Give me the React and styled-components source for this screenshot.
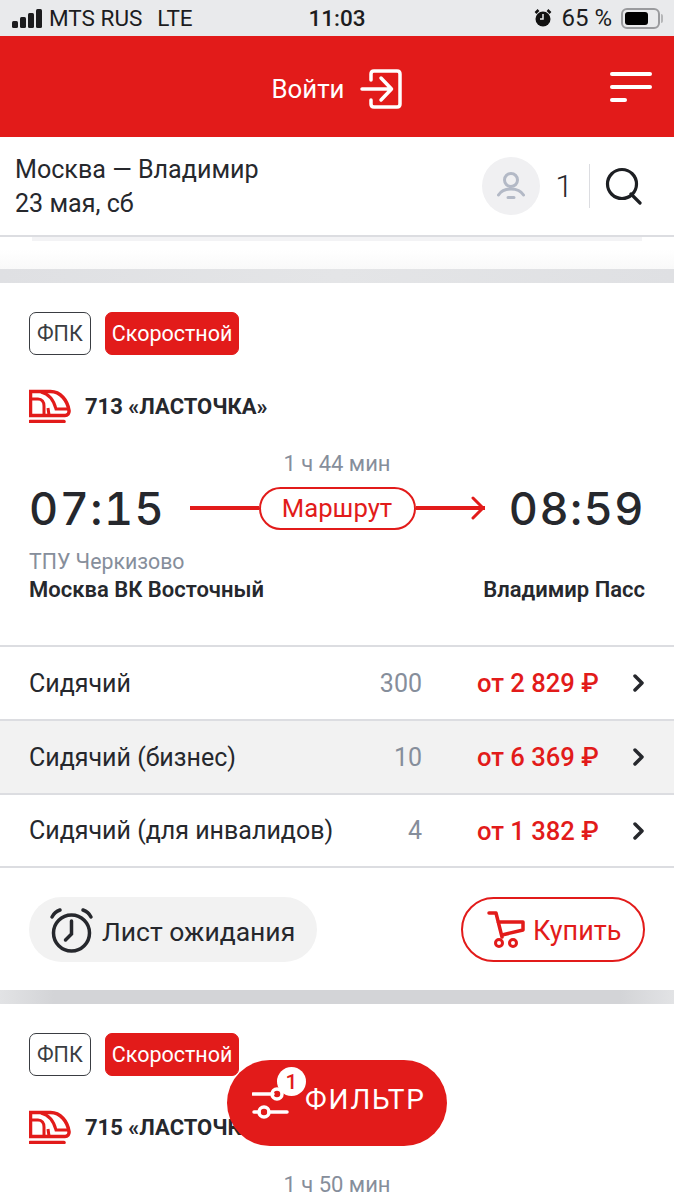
import React from 'react'
import styled, { createGlobalStyle } from 'styled-components'

const RED = '#e21b1a'
const INK = '#26282d'
const GREY = '#868e9b'
const FONT = `Roboto, "Noto Sans", "Liberation Sans", sans-serif`

const Global = createGlobalStyle`
  html, body { margin: 0; padding: 0; background: #fff; }
  body { font-family: ${FONT}; color: ${INK}; }
  * { box-sizing: border-box; }
`

const Page = styled.div`
  position: relative;
  width: 674px;
  height: 1200px;
  overflow: hidden;
`

const StatusBar = styled.div`
  height: 36px;
  background: #e9eaec;
  display: grid;
  grid-template-columns: 1fr auto 1fr;
  align-items: center;
  padding: 0 9px 0 12px;
  font-size: 24px;
  color: #1c1c1e;
`
const StatusLeft = styled.div`
  display: flex;
  align-items: center;
  gap: 7px;
`
const Carrier = styled.span`
  font-size: 22.5px;
  &:last-child {
    margin-left: 8px;
  }
`
const Clock = styled.span`
  font-size: 22.5px;
  font-weight: 500;
  margin-right: 3px;
`
const StatusRight = styled.div`
  display: flex;
  align-items: center;
  justify-content: flex-end;
  gap: 9px;
`
const Battery = styled.div`
  position: relative;
  width: 39px;
  height: 21px;
  padding: 2px;
  margin-right: 5px;
  border: 2px solid #9a9b9e;
  border-radius: 6px;
  &::before {
    content: '';
    display: block;
    width: 23px;
    height: 13px;
    background: #000;
    border-radius: 3px;
  }
  &::after {
    content: '';
    position: absolute;
    right: -5px;
    top: 4px;
    width: 2px;
    height: 9px;
    background: #b5b6b8;
    border-radius: 0 2px 2px 0;
  }
`

const Header = styled.header`
  height: 101px;
  background: ${RED};
  display: flex;
  align-items: center;
  justify-content: center;
  position: relative;
`
const Login = styled.div`
  display: flex;
  align-items: center;
  gap: 16px;
  color: #fff;
  font-size: 25.8px;
  margin-top: 5px;
`
const Burger = styled.div`
  position: absolute;
  top: 36px;
  right: 22px;
  width: 42px;
  display: flex;
  flex-direction: column;
  gap: 9px;
`
const BurgerLine = styled.span`
  display: block;
  height: 4px;
  width: ${p => p.$w}px;
  background: #fff;
  border-radius: 2px;
`

const SubHeader = styled.div`
  height: 100px;
  display: flex;
  align-items: center;
  justify-content: space-between;
  padding: 0 31px 0 15px;
  border-bottom: 2px solid #dcdde1;
`
const Route = styled.div`
  font-size: 25.1px;
  line-height: 34px;
  color: ${INK};
  padding-top: 2px;
`
const SubRight = styled.div`
  display: flex;
  align-items: center;
`
const Avatar = styled.div`
  width: 58px;
  height: 58px;
  border-radius: 50%;
  background: #f0f0f2;
  display: flex;
  align-items: center;
  justify-content: center;
`
const Count = styled.span`
  font-size: 32px;
  font-weight: 300;
  margin: 0 16px 0 15px;
`
const Divider = styled.span`
  width: 1px;
  height: 44px;
  background: #dcdde1;
  margin-right: 15px;
`

const Sliver = styled.div`
  height: 4px;
  margin: 0 32px;
  background: #f3f3f5;
`
const Fade = styled.div`
  height: 28px;
  background: linear-gradient(#fff 30%, #f9f9f9);
`
const Band = styled.div`
  height: 14px;
  background: linear-gradient(90deg, #dfe0e3, #e4e5e7 50%, #dfe0e3);
`
const DarkBand = styled(Band)`
  background: linear-gradient(90deg, #e2e3e5, #d3d4d7 8%, #d3d4d7 92%, #e2e3e5);
`

const Card = styled.section`
  padding-top: 29px;
`
const Tags = styled.div`
  display: flex;
  gap: 14px;
  padding: 0 29px;
`
const Tag = styled.span`
  height: 43px;
  padding: 0 ${p => (p.$fill ? 6 : 7)}px;
  display: flex;
  align-items: center;
  font-size: 21.5px;
  border-radius: 7px;
  border: 1.5px solid ${p => (p.$fill ? RED : '#3a3d42')};
  background: ${p => (p.$fill ? RED : '#fff')};
  color: ${p => (p.$fill ? '#fff' : '#3a3d42')};
`
const TrainRow = styled.div`
  display: flex;
  align-items: center;
  gap: 14px;
  padding: 0 29px;
  margin-top: 33px;
  height: 36px;
`
const TrainName = styled.span`
  font-size: 22px;
  font-weight: 700;
`
const Duration = styled.div`
  text-align: center;
  font-size: 22px;
  color: ${GREY};
  margin-top: 27px;
  height: 25px;
  line-height: 25px;
`
const Times = styled.div`
  display: flex;
  align-items: center;
  justify-content: space-between;
  padding: 0 29px;
  margin-top: 10px;
  height: 44px;
`
const Time = styled.span`
  font-family: Inter, ${FONT};
  font-size: 45px;
  letter-spacing: 1.5px;
  font-weight: 500;
  font-variant-numeric: tabular-nums;
  color: ${INK};
`
const Track = styled.div`
  width: 295px;
  display: flex;
  align-items: center;
`
const Line = styled.span`
  flex: 1;
  height: 3.5px;
  background: ${RED};
`
const RouteButton = styled.span`
  width: 157px;
  height: 43px;
  border: 2px solid ${RED};
  border-radius: 22px;
  display: flex;
  align-items: center;
  justify-content: center;
  font-size: 25.7px;
  color: ${RED};
`
const Arrow = styled.svg`
  margin-left: -14px;
`
const Stations = styled.div`
  display: flex;
  align-items: flex-end;
  justify-content: space-between;
  padding: 0 29px;
  margin-top: 18px;
  height: 56px;
`
const StationInfo = styled.div`
  display: flex;
  flex-direction: column;
`
const Terminal = styled.span`
  font-size: 21.3px;
  line-height: 28px;
  color: ${GREY};
`
const Station = styled.span`
  font-size: 22px;
  line-height: 28px;
  font-weight: 600;
`
const Fares = styled.div`
  margin-top: 41px;
  border-top: 2px solid #dcdde1;
`
const Fare = styled.div`
  height: 74px;
  display: grid;
  grid-template-columns: 1fr 60px 196px 27px;
  align-items: center;
  padding: 0 29px;
  border-bottom: 2px solid #dcdde1;
  background: ${p => (p.$active ? '#f2f2f2' : '#fff')};
  font-size: 25px;
  &:last-child {
    height: 73px;
  }
`
const Seats = styled.span`
  text-align: right;
  color: ${GREY};
  font-size: 25px;
`
const Price = styled.span`
  color: ${RED};
  font-size: 25.6px;
  font-weight: 500;
  padding-left: 55px;
  white-space: nowrap;
`
const Chevron = styled.svg`
  justify-self: end;
`
const Actions = styled.div`
  display: flex;
  justify-content: space-between;
  padding: 29px 29px 0;
  height: 122px;
`
const Waiting = styled.div`
  height: 65px;
  width: 288px;
  padding-left: 20px;
  background: #f2f2f2;
  border-radius: 33px;
  display: flex;
  align-items: center;
  gap: 8px;
  font-size: 26.5px;
`
const Buy = styled.div`
  height: 65px;
  width: 184px;
  padding-left: 24px;
  border: 2px solid ${RED};
  border-radius: 33px;
  display: flex;
  align-items: center;
  gap: 8px;
  color: ${RED};
  font-size: 27px;
`
const ActionLabel = styled.span`
  margin-top: 3px;
`
const Fab = styled.div`
  position: absolute;
  left: 227px;
  top: 1060px;
  width: 220px;
  height: 86px;
  background: ${RED};
  border-radius: 43px;
  color: #fff;
  font-size: 28px;
  letter-spacing: 1.8px;
  display: flex;
  align-items: center;
  padding: 0 0 0 25px;
  gap: 16px;
`
const FabLabel = styled.span`
  margin-top: -7px;
`
const FabIcon = styled.div`
  position: relative;
  width: 37px;
  height: 40px;
`
const Badge = styled.span`
  position: absolute;
  left: 25px;
  top: -16px;
  width: 29px;
  height: 29px;
  border-radius: 50%;
  background: #fff;
  color: ${RED};
  font-size: 21px;
  font-weight: 500;
  letter-spacing: 0;
  display: flex;
  align-items: center;
  justify-content: center;
`

const TrainIcon = () => (
  <svg width="42" height="34" viewBox="0 0 42 34" fill="none" stroke={RED} strokeWidth="3.500">
    <path d="M1.500 26.500V2.500h20c10 0 17 9 18.500 19 .4 3-1.500 5-4 5z" />
    <path d="M2 10h7c4 0 6 3 6 7v9" strokeWidth="3" />
    <path d="M12 3c8 2 13 9 15 17h12M19 19l1 7" strokeWidth="3" />
    <path d="M1 32.500h34" strokeLinecap="round" />
  </svg>
)

const TrainTitle = ({ name }) => (
  <TrainRow>
    <TrainIcon />
    <TrainName>{name}</TrainName>
  </TrainRow>
)

const fares = [
  { name: 'Сидячий', seats: '300', price: 'от 2 829 ₽' },
  { name: 'Сидячий (бизнес)', seats: '10', price: 'от 6 369 ₽', active: true },
  { name: 'Сидячий (для инвалидов)', seats: '4', price: 'от 1 382 ₽' },
]

export default function App() {
  return (
    <Page>
      <Global />
      <StatusBar>
        <StatusLeft>
          <svg width="30" height="19" viewBox="0 0 30 19" fill="#1c1c1e">
            <rect x="0" y="12" width="6" height="7" rx="1.500" />
            <rect x="8" y="8" width="6" height="11" rx="1.500" />
            <rect x="16" y="4" width="6" height="15" rx="1.500" />
            <rect x="24" y="0" width="6" height="19" rx="1.500" />
          </svg>
          <Carrier>MTS RUS</Carrier>
          <Carrier>LTE</Carrier>
        </StatusLeft>
        <Clock>11:03</Clock>
        <StatusRight>
          <svg width="18" height="20" viewBox="0 0 18 20">
            <circle cx="9" cy="11" r="7.500" fill="#111" />
            <path d="M1.500 5l3-3M16.500 5l-3-3" stroke="#111" strokeWidth="2.500" />
            <path d="M9 6v5H6" stroke="#e9eaec" strokeWidth="1.500" fill="none" />
          </svg>
          <span>65 %</span>
          <Battery />
        </StatusRight>
      </StatusBar>

      <Header>
        <Login>
          Войти
          <svg width="42" height="40" viewBox="0 0 42 40" fill="none" stroke="#fff" strokeWidth="3.500" strokeLinecap="round" strokeLinejoin="round">
            <path d="M11 11V5c0-2 1-3 3-3h23c2 0 3 1 3 3v30c0 2-1 3-3 3H14c-2 0-3-1-3-3v-4" />
            <path d="M2 20h29M21 9l10.500 11L21 31" />
          </svg>
        </Login>
        <Burger>
          <BurgerLine $w={42} />
          <BurgerLine $w={42} />
          <BurgerLine $w={17} />
        </Burger>
      </Header>

      <SubHeader>
        <Route>
          Москва — Владимир
          <br />
          23 мая, сб
        </Route>
        <SubRight>
          <Avatar>
            <svg width="28" height="28" viewBox="0 0 28 28" fill="none" stroke="#b3b9c6" strokeWidth="3" strokeLinecap="round">
              <ellipse cx="14" cy="8" rx="6.500" ry="6.500" />
              <path d="M1.500 23c2.500-4 6.500-6 12.500-6s10 2 12.500 6M11 25.500h6" />
            </svg>
          </Avatar>
          <Count>1</Count>
          <Divider />
          <svg width="38" height="38" viewBox="0 0 38 38" fill="none" stroke="#1d1f23" strokeWidth="3.200" strokeLinecap="round">
            <ellipse cx="17" cy="17" rx="14.500" ry="14.500" />
            <path d="M26 27l9 9" />
          </svg>
        </SubRight>
      </SubHeader>
      <Sliver />
      <Fade />
      <Band />

      <Card>
        <Tags>
          <Tag>ФПК</Tag>
          <Tag $fill>Скоростной</Tag>
        </Tags>
        <TrainTitle name="713 «ЛАСТОЧКА»" />
        <Duration>1 ч 44 мин</Duration>
        <Times>
          <Time>07:15</Time>
          <Track>
            <Line />
            <RouteButton>Маршрут</RouteButton>
            <Line />
            <Arrow width="14" height="24" viewBox="0 0 14 24" fill="none" stroke={RED} strokeWidth="3" strokeLinecap="round" strokeLinejoin="round">
              <path d="M2 2l10 10L2 22" />
            </Arrow>
          </Track>
          <Time>08:59</Time>
        </Times>
        <Stations>
          <StationInfo>
            <Terminal>ТПУ Черкизово</Terminal>
            <Station>Москва ВК Восточный</Station>
          </StationInfo>
          <Station>Владимир Пасс</Station>
        </Stations>
        <Fares>
          {fares.map(f => (
            <Fare key={f.name} $active={f.active}>
              <span>{f.name}</span>
              <Seats>{f.seats}</Seats>
              <Price>{f.price}</Price>
              <Chevron width="12" height="18" viewBox="0 0 12 18" fill="none" stroke="#26282d" strokeWidth="3.500" strokeLinecap="round" strokeLinejoin="round">
                <path d="M2 2l7 7-7 7" />
              </Chevron>
            </Fare>
          ))}
        </Fares>
        <Actions>
          <Waiting>
            <svg width="45" height="46" viewBox="0 0 45 46" fill="none" stroke="#26282d" strokeWidth="3.500" strokeLinecap="round">
              <circle cx="22.500" cy="26" r="18" />
              <path d="M22.500 14v13l-6 6M3 10c2-4 5-6 8-7M42 10c-2-4-5-6-8-7" />
            </svg>
            <ActionLabel>Лист ожидания</ActionLabel>
          </Waiting>
          <Buy>
            <svg width="38" height="38" viewBox="0 0 38 38" fill="none" stroke={RED} strokeWidth="3.500" strokeLinecap="round" strokeLinejoin="round">
              <path d="M2 2h7l6 24M11 11h25v8l-21 5" />
              <circle cx="12" cy="32" r="3.500" strokeWidth="3" />
              <circle cx="26" cy="32" r="3.500" strokeWidth="3" />
            </svg>
            <ActionLabel>Купить</ActionLabel>
          </Buy>
        </Actions>
      </Card>
      <DarkBand />

      <Card>
        <Tags>
          <Tag>ФПК</Tag>
          <Tag $fill>Скоростной</Tag>
        </Tags>
        <TrainTitle name="715 «ЛАСТОЧКА»" />
        <Duration>1 ч 50 мин</Duration>
      </Card>

      <Fab>
        <FabIcon>
          <svg width="37" height="40" viewBox="0 0 37 40" fill="none" stroke="#fff" strokeWidth="3.500" strokeLinecap="round">
            <path d="M1 11h20M2 29h5M17 29h18" />
            <circle cx="25" cy="11" r="5" />
            <circle cx="12" cy="29" r="5" />
          </svg>
          <Badge>1</Badge>
        </FabIcon>
        <FabLabel>ФИЛЬТР</FabLabel>
      </Fab>
    </Page>
  )
}
